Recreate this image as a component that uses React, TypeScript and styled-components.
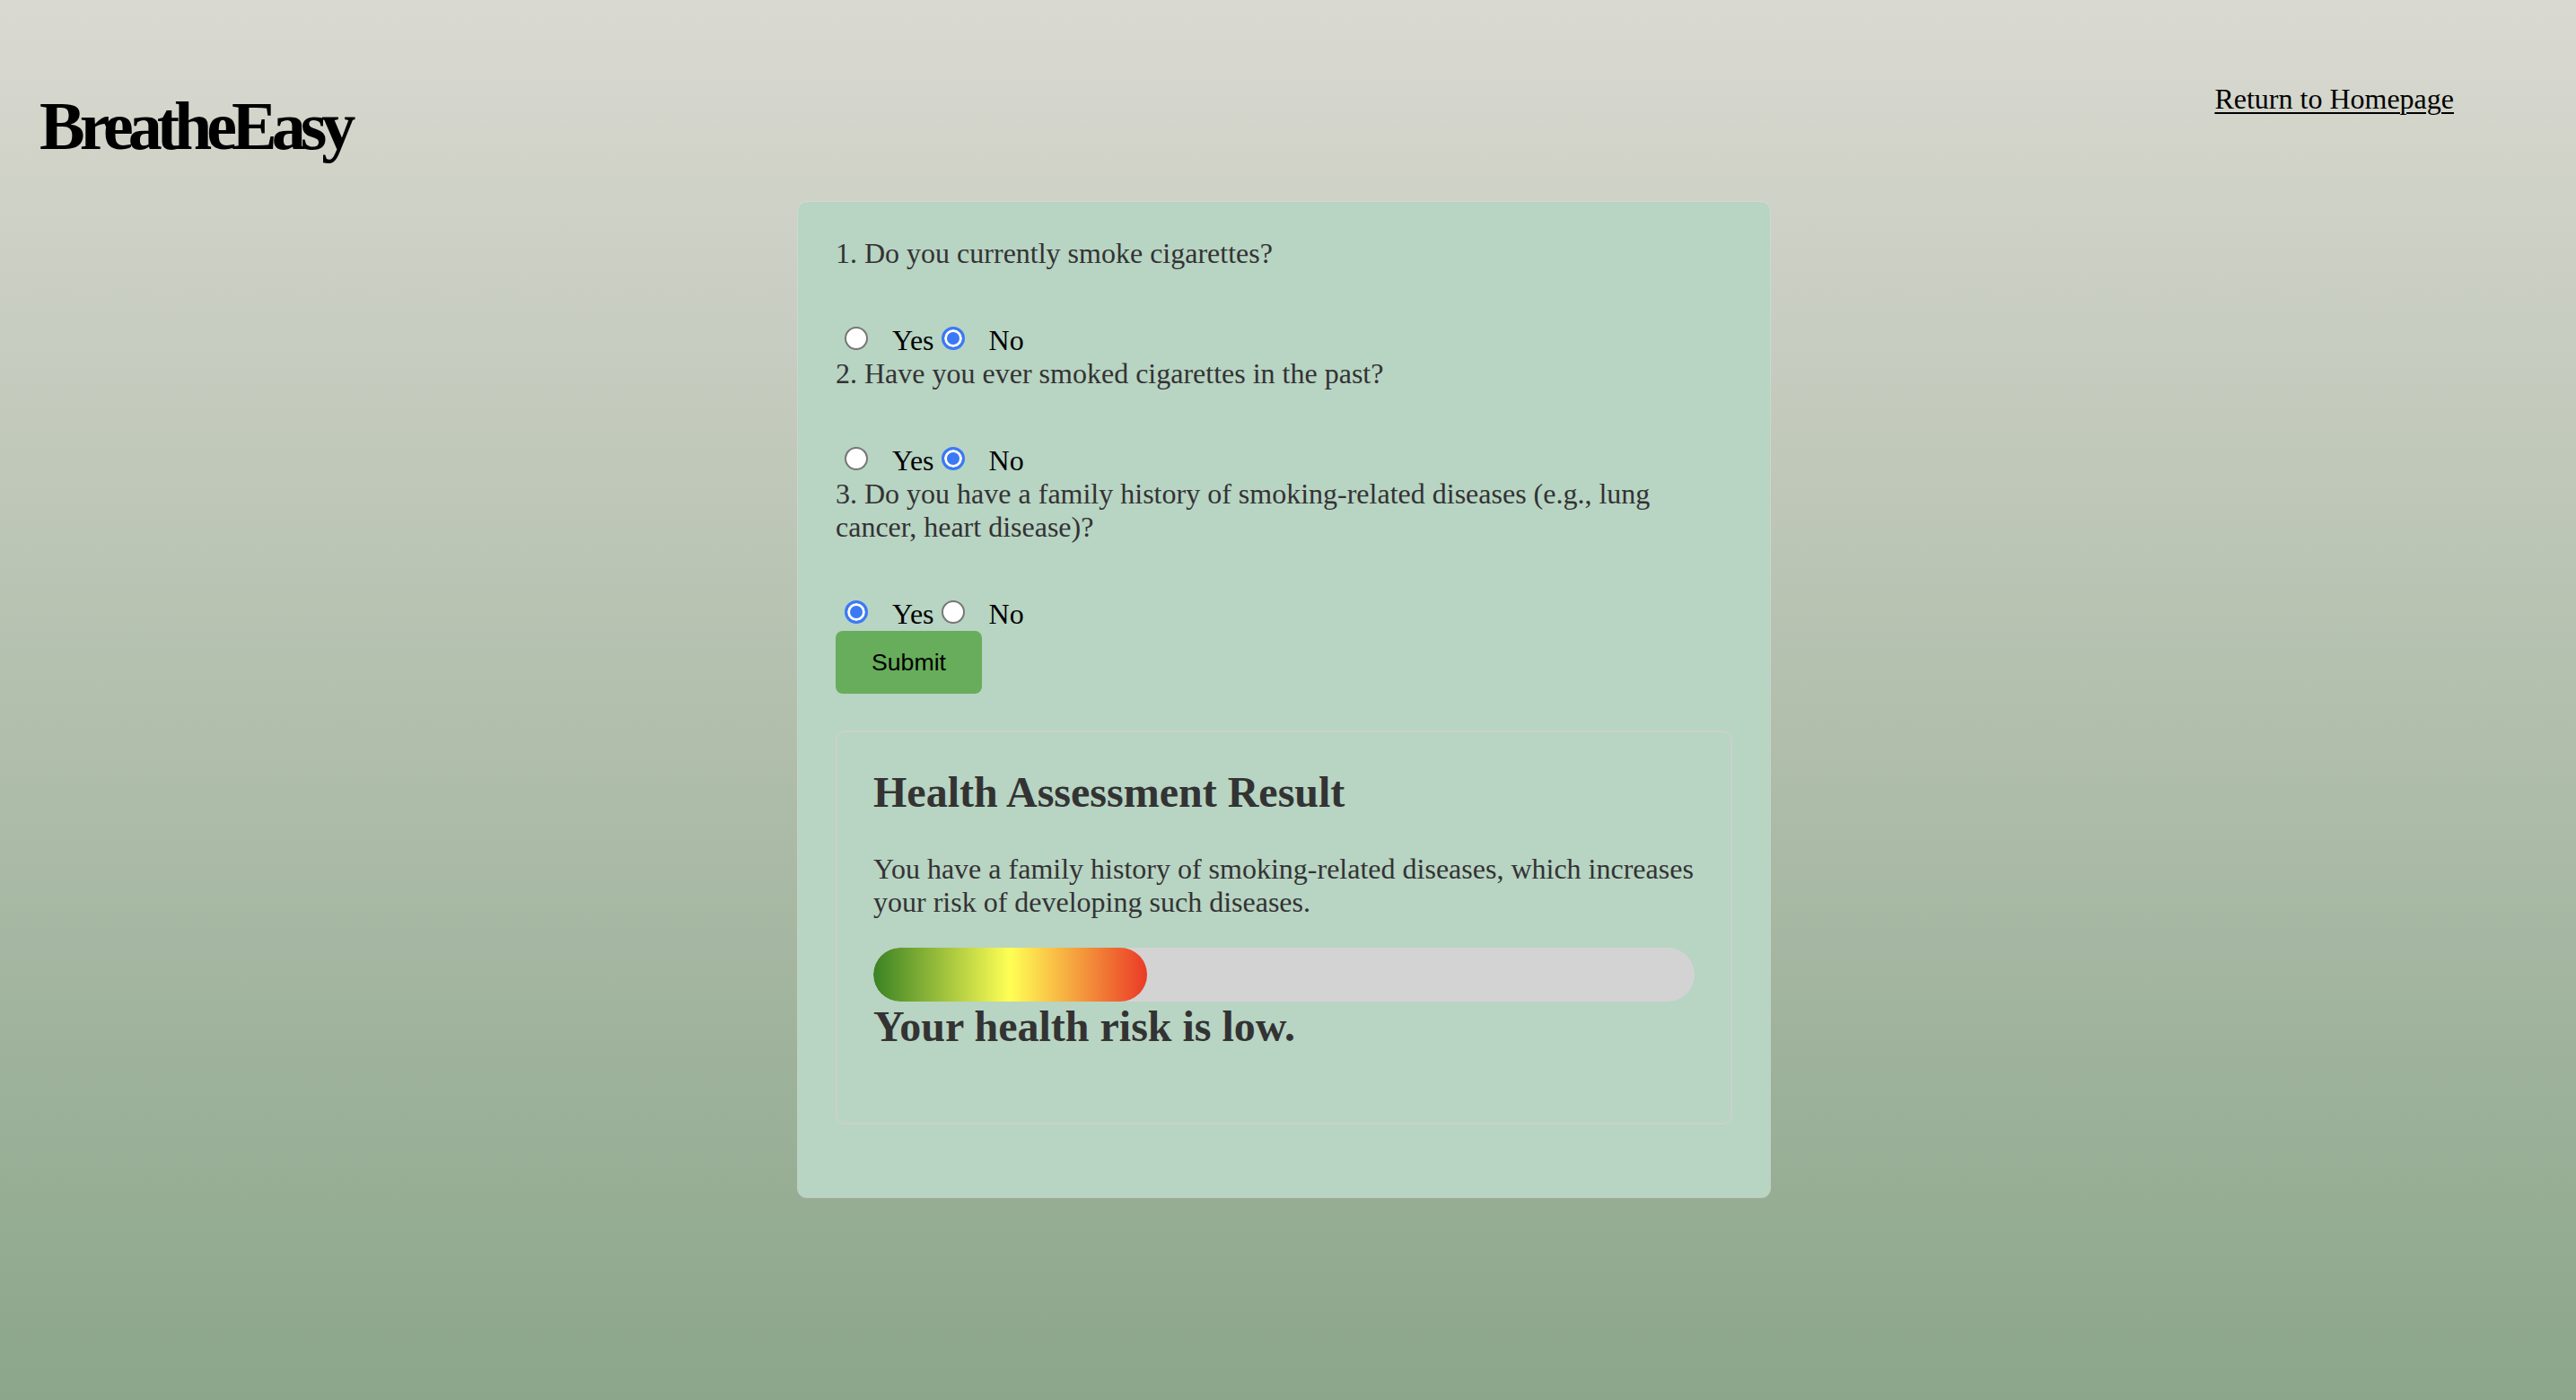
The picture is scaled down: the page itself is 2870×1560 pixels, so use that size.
import React from "react";
import styled, { createGlobalStyle } from "styled-components";

const GlobalStyle = createGlobalStyle`
  html, body {
    margin: 0;
    padding: 0;
  }
  body {
    min-height: 100vh;
    background: linear-gradient(to bottom, #dad9d1 0%, #8ba68a 100%);
    font-family: "Liberation Serif", "Times New Roman", serif;
  }
  #root {
    min-height: 100vh;
  }
`;

const Page = styled.div`
  min-height: 100vh;
  display: flex;
  flex-direction: column;
`;

const Header = styled.header`
  display: flex;
  justify-content: space-between;
  align-items: flex-start;
  padding: 92px 136px 0 44px;
`;

const Logo = styled.h1`
  margin: 5px 0 0;
  font-family: "Liberation Serif", "Times New Roman", serif;
  font-size: 76px;
  line-height: 87px;
  font-weight: 700;
  letter-spacing: -6px;
  color: #000;
`;

const HomeLink = styled.a`
  font-size: 32px;
  line-height: 37px;
  color: #000;
  text-decoration: underline;
  text-decoration-thickness: 2px;
  text-underline-offset: 4px;
  cursor: pointer;
`;

const Main = styled.main`
  display: flex;
  justify-content: center;
  padding-right: 9px;
`;

const Card = styled.section`
  box-sizing: border-box;
  width: 1083px;
  margin-top: 41px;
  padding: 39px 42px 40px;
  background: #b8d4c3;
  border-radius: 10px;
  box-shadow: 0 0 0 1px rgba(214, 218, 214, 0.7);
`;

const QuestionText = styled.p`
  margin: 0 0 60px;
  font-size: 32px;
  line-height: 37px;
  color: #333;
`;

const RadioRow = styled.div`
  display: flex;
  align-items: flex-start;
  height: 37px;
`;

const RadioInput = styled.input`
  appearance: none;
  -webkit-appearance: none;
  box-sizing: border-box;
  flex-shrink: 0;
  width: 26px;
  height: 26px;
  margin: 3px 0 0 10px;
  border-radius: 50%;
  border: 2px solid #777;
  background: #fff;

  &:checked {
    border: 3px solid #3b79f4;
    background: #3b79f4;
    box-shadow: inset 0 0 0 3px #fff;
  }
`;

const OptionLabel = styled.label`
  margin-left: 27px;
  margin-right: -2px;
  font-size: 32px;
  line-height: 37px;
  color: #000;
`;

const SubmitButton = styled.button`
  display: block;
  height: 70px;
  margin: 0;
  padding: 0 40px;
  border: none;
  border-radius: 8px;
  background: #67ad5b;
  color: #000;
  font-family: "Liberation Sans", Arial, sans-serif;
  font-size: 26.67px;
  cursor: pointer;
`;

const ResultBox = styled.div`
  margin: 41px 0 41px;
  padding: 39px 40px 40px;
  border: 2px solid #cbd0cc;
  border-radius: 10px;
`;

const ResultTitle = styled.h2`
  margin: 0 0 40px;
  font-size: 48px;
  line-height: 55px;
  font-weight: 700;
  color: #333;
`;

const ResultText = styled.p`
  margin: 0 0 32px;
  font-size: 32px;
  line-height: 37px;
  color: #333;
`;

const Track = styled.div`
  height: 60px;
  border-radius: 30px;
  background: #d3d3d3;
  overflow: hidden;
`;

const Fill = styled.div`
  height: 100%;
  border-radius: 30px;
  background: linear-gradient(to right, #3a8224 0%, #ffff55 50%, #ea3a26 100%);
`;

const RiskText = styled.h2`
  margin: 0 0 40px;
  font-size: 48px;
  line-height: 55px;
  font-weight: 700;
  color: #333;
`;

type Question = { id: string; text: string; answer: "yes" | "no" };

const questions: Question[] = [
  { id: "q1", text: "1. Do you currently smoke cigarettes?", answer: "no" },
  { id: "q2", text: "2. Have you ever smoked cigarettes in the past?", answer: "no" },
  {
    id: "q3",
    text: "3. Do you have a family history of smoking-related diseases (e.g., lung cancer, heart disease)?",
    answer: "yes",
  },
];

const riskLevel = 1 / 3;

export default function App() {
  return (
    <Page>
      <GlobalStyle />
      <Header>
        <Logo>BreatheEasy</Logo>
        <HomeLink>Return to Homepage</HomeLink>
      </Header>
      <Main>
        <Card>
          <form onSubmit={(e) => e.preventDefault()}>
            {questions.map((q) => (
              <div key={q.id}>
                <QuestionText>{q.text}</QuestionText>
                <RadioRow>
                  <RadioInput
                    type="radio"
                    name={q.id}
                    id={`${q.id}-yes`}
                    checked={q.answer === "yes"}
                    readOnly
                  />
                  <OptionLabel htmlFor={`${q.id}-yes`}>Yes</OptionLabel>
                  <RadioInput
                    type="radio"
                    name={q.id}
                    id={`${q.id}-no`}
                    checked={q.answer === "no"}
                    readOnly
                  />
                  <OptionLabel htmlFor={`${q.id}-no`}>No</OptionLabel>
                </RadioRow>
              </div>
            ))}
            <SubmitButton type="submit">Submit</SubmitButton>
          </form>
          <ResultBox>
            <ResultTitle>Health Assessment Result</ResultTitle>
            <ResultText>
              You have a family history of smoking-related diseases, which increases your risk of
              developing such diseases.
            </ResultText>
            <Track>
              <Fill style={{ width: `${riskLevel * 100}%` }} />
            </Track>
            <RiskText>Your health risk is low.</RiskText>
          </ResultBox>
        </Card>
      </Main>
    </Page>
  );
}
